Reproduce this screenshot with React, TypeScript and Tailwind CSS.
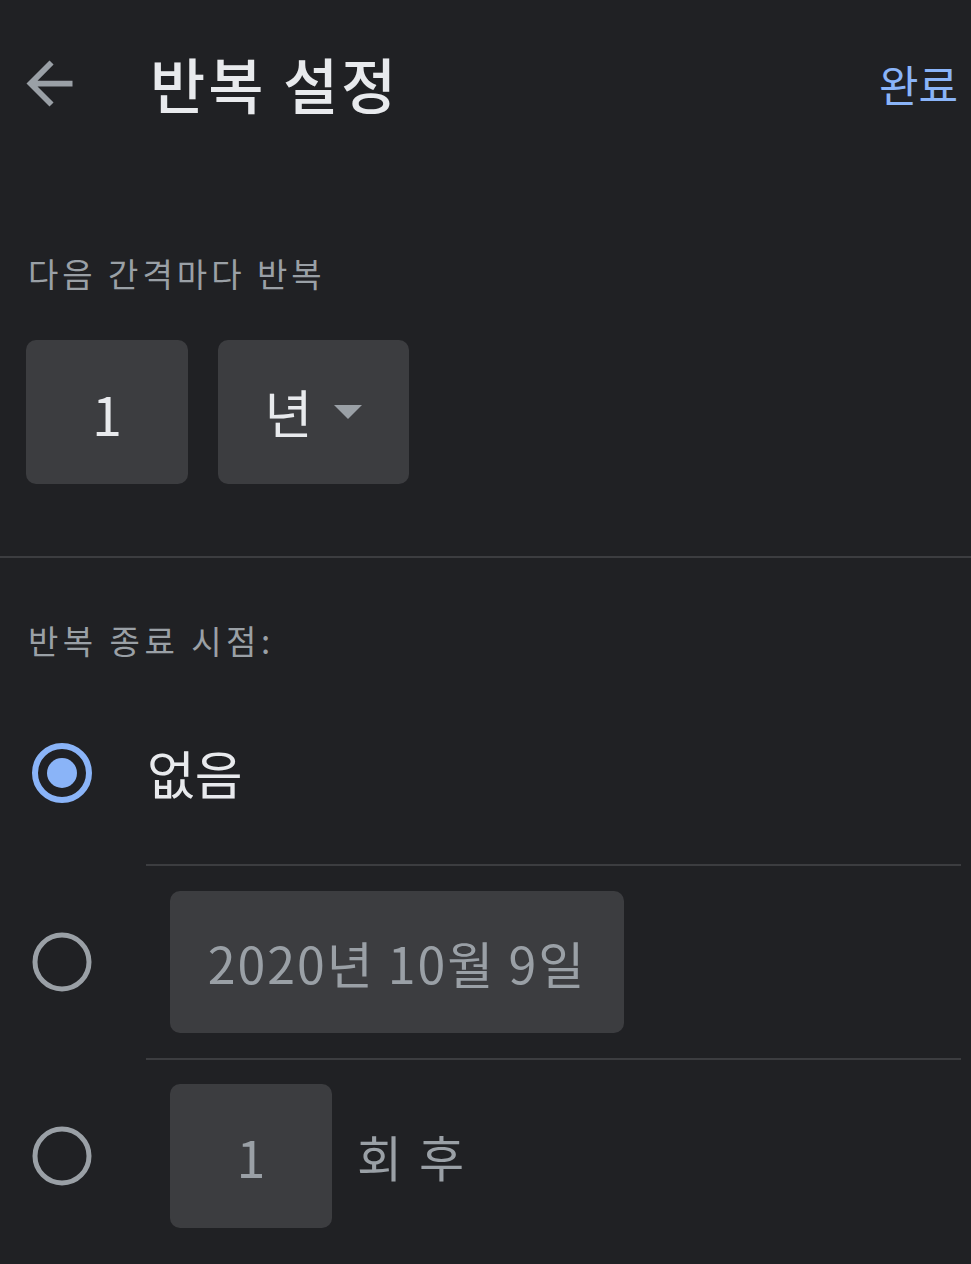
import React from "react";

const font = { fontFamily: '"Noto Sans CJK KR", "Noto Sans", sans-serif' };

function Radio({ checked }: { checked: boolean }) {
  return (
    <svg width="68" height="68" viewBox="0 0 68 68" className="shrink-0">
      <circle cx="34" cy="34" r="27" fill="none" stroke={checked ? "#8ab4f8" : "#9aa0a6"} strokeWidth={checked ? 6 : 5} />
      {checked && <circle cx="34" cy="34" r="15" fill="#8ab4f8" />}
    </svg>
  );
}

export default function App() {
  return (
    <div className="w-full min-h-[1264px] bg-[#202124] text-[#e8eaed]" style={font}>
      {/* Header */}
      <div className="flex items-center h-[166px] pl-[15px] pr-[13px]">
        <svg width="69" height="69" viewBox="0 0 24 24" className="shrink-0">
          <path fill="#9aa0a6" d="M20 11H7.83l5.59-5.59L12 4l-8 8 8 8 1.41-1.41L7.83 13H20v-2z" />
        </svg>
        <div className="ml-[66px] text-[60px] font-medium leading-none tracking-[3px] text-[#e8eaed]">반복 설정</div>
        <div className="ml-auto text-[43px] leading-none text-[#8ab4f8]">완료</div>
      </div>

      {/* Interval */}
      <div className="px-[26px]">
        <div className="mt-[88px] h-[40px] flex items-center text-[33px] tracking-[4px] text-[#9aa0a6] pl-[2px]">다음 간격마다 반복</div>
        <div className="mt-[46px] flex gap-[30px]">
          <div className="w-[162px] h-[144px] rounded-[10px] bg-[#3c3d40] flex items-center justify-center text-[54px] text-[#e8eaed]">1</div>
          <div className="w-[191px] h-[144px] rounded-[10px] bg-[#3c3d40] flex items-center justify-center gap-[22px] text-[52px] text-[#e8eaed]">
            <span>년</span>
            <svg width="28" height="14" viewBox="0 0 28 14"><path d="M0 0h28L14 14z" fill="#9aa0a6" /></svg>
          </div>
        </div>
      </div>

      <div className="mt-[72px] h-[2px] bg-[#3c3d40]" />

      <div className="mt-[63px] h-[40px] flex items-center text-[33px] tracking-[4.5px] text-[#9aa0a6] pl-[28px]">반복 종료 시점:</div>

      {/* Options */}
      <div className="mt-[21px]">
        <div className="h-[182px] flex items-center pl-[28px]">
          <Radio checked />
          <div className="ml-[51px] text-[52px] text-[#e8eaed]">없음</div>
        </div>
        <div className="ml-[146px] mr-[10px] h-[2px] bg-[#3c3d40]" />
        <div className="h-[192px] flex items-center pl-[28px]">
          <Radio checked={false} />
          <div className="ml-[74px] w-[454px] h-[142px] rounded-[10px] bg-[#3c3d40] flex items-center justify-center text-[50px] tracking-[2px] text-[#9aa0a6]">
            2020년 10월 9일
          </div>
        </div>
        <div className="ml-[146px] mr-[10px] h-[2px] bg-[#3c3d40]" />
        <div className="h-[192px] flex items-center pl-[28px]">
          <Radio checked={false} />
          <div className="ml-[74px] w-[162px] h-[144px] rounded-[10px] bg-[#3c3d40] flex items-center justify-center text-[52px] text-[#9aa0a6]">1</div>
          <div className="ml-[25px] text-[49px] tracking-[3px] text-[#9aa0a6]">회 후</div>
        </div>
      </div>
    </div>
  );
}
